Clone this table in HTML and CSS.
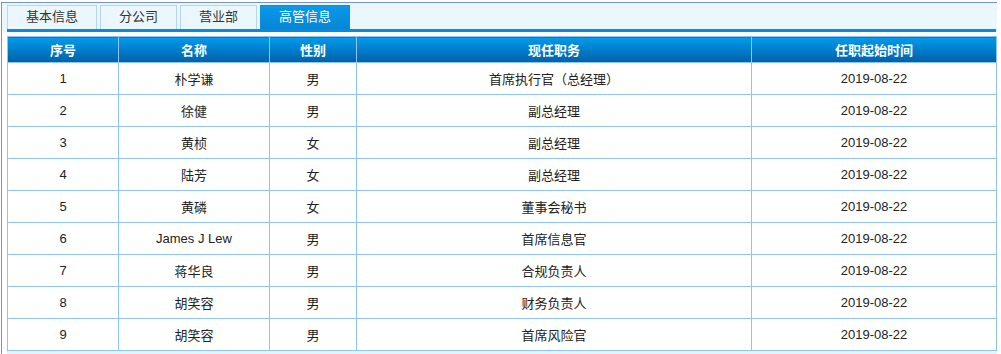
FILE: index.html
```html
<!DOCTYPE html>
<html lang="zh">
<head>
<meta charset="utf-8">
<title>高管信息</title>
<link rel="stylesheet" href="styles.css">
</head>
<body>
<div class="wrap">
  <div class="tabbar">
    <div class="tabs">
      <div class="tab t1">基本信息</div>
      <div class="tab t2">分公司</div>
      <div class="tab t3">营业部</div>
      <div class="tab t4 active">高管信息</div>
    </div>
  </div>
  <table class="grid">
    <colgroup>
      <col class="c1"><col class="c2"><col class="c3"><col class="c4"><col class="c5">
    </colgroup>
    <thead>
      <tr><th>序号</th><th>名称</th><th>性别</th><th>现任职务</th><th>任职起始时间</th></tr>
    </thead>
    <tbody>
      <tr><td>1</td><td>朴学谦</td><td>男</td><td>首席执行官（总经理）</td><td>2019-08-22</td></tr>
      <tr><td>2</td><td>徐健</td><td>男</td><td>副总经理</td><td>2019-08-22</td></tr>
      <tr><td>3</td><td>黄桢</td><td>女</td><td>副总经理</td><td>2019-08-22</td></tr>
      <tr><td>4</td><td>陆芳</td><td>女</td><td>副总经理</td><td>2019-08-22</td></tr>
      <tr><td>5</td><td>黄磷</td><td>女</td><td>董事会秘书</td><td>2019-08-22</td></tr>
      <tr><td>6</td><td>James J Lew</td><td>男</td><td>首席信息官</td><td>2019-08-22</td></tr>
      <tr><td>7</td><td>蒋华良</td><td>男</td><td>合规负责人</td><td>2019-08-22</td></tr>
      <tr><td>8</td><td>胡笑容</td><td>男</td><td>财务负责人</td><td>2019-08-22</td></tr>
      <tr><td>9</td><td>胡笑容</td><td>男</td><td>首席风险官</td><td>2019-08-22</td></tr>
    </tbody>
  </table>
  <div class="foot"></div>
</div>
</body>
</html>
```
FILE: styles.css
```css
html, body {
  margin: 0;
  padding: 0;
  background: #fff;
}
body {
  font-family: "Liberation Sans", "Noto Sans CJK SC", sans-serif;
  font-size: 13px;
  color: #222;
  overflow: hidden;
}
.wrap {
  margin: 2px 0 0 1px;
  border-top: 1px solid #7391d3;
  border-left: 1px solid #7391d3;
  width: 995px;
  height: 360px;
}
.tabbar {
  background: #ebf7fe;
  padding: 2px 0 0 5px;
}
.tabs {
  display: flex;
  gap: 3px;
  border-bottom: 3px solid #0c89d9;
  margin-right: 1px;
}
.tab {
  box-sizing: border-box;
  height: 24px;
  line-height: 22px;
  border: 1px solid #b3d7f2;
  border-bottom: none;
  background: #ebf7fe;
  text-align: center;
  color: #333;
}
.t1 { width: 90px; }
.t2 { width: 77px; }
.t3 { width: 77px; }
.t4 { width: 90px; }
.tab.active {
  background: linear-gradient(#0a99e8, #0686d6);
  border-color: #0a90e0;
  color: #fff;
}
.grid {
  margin: 4px 0 0 5px;
  width: 990px;
  border-collapse: collapse;
  table-layout: fixed;
}
.c1 { width: 111px; }
.c2 { width: 151px; }
.c3 { width: 87px; }
.c4 { width: 395px; }
.c5 { width: 245px; }
.grid th, .grid td {
  border: 1px solid #8ec5f1;
  text-align: center;
  padding: 0;
}
.grid th {
  height: 25px;
  background: linear-gradient(#029bec, #0060a8);
  color: #fff;
  font-weight: bold;
}
.grid td {
  height: 31px;
}
.foot {
  margin-left: 5px;
  width: 990px;
  height: 10px;
  background: #e2f4fd;
}
```
